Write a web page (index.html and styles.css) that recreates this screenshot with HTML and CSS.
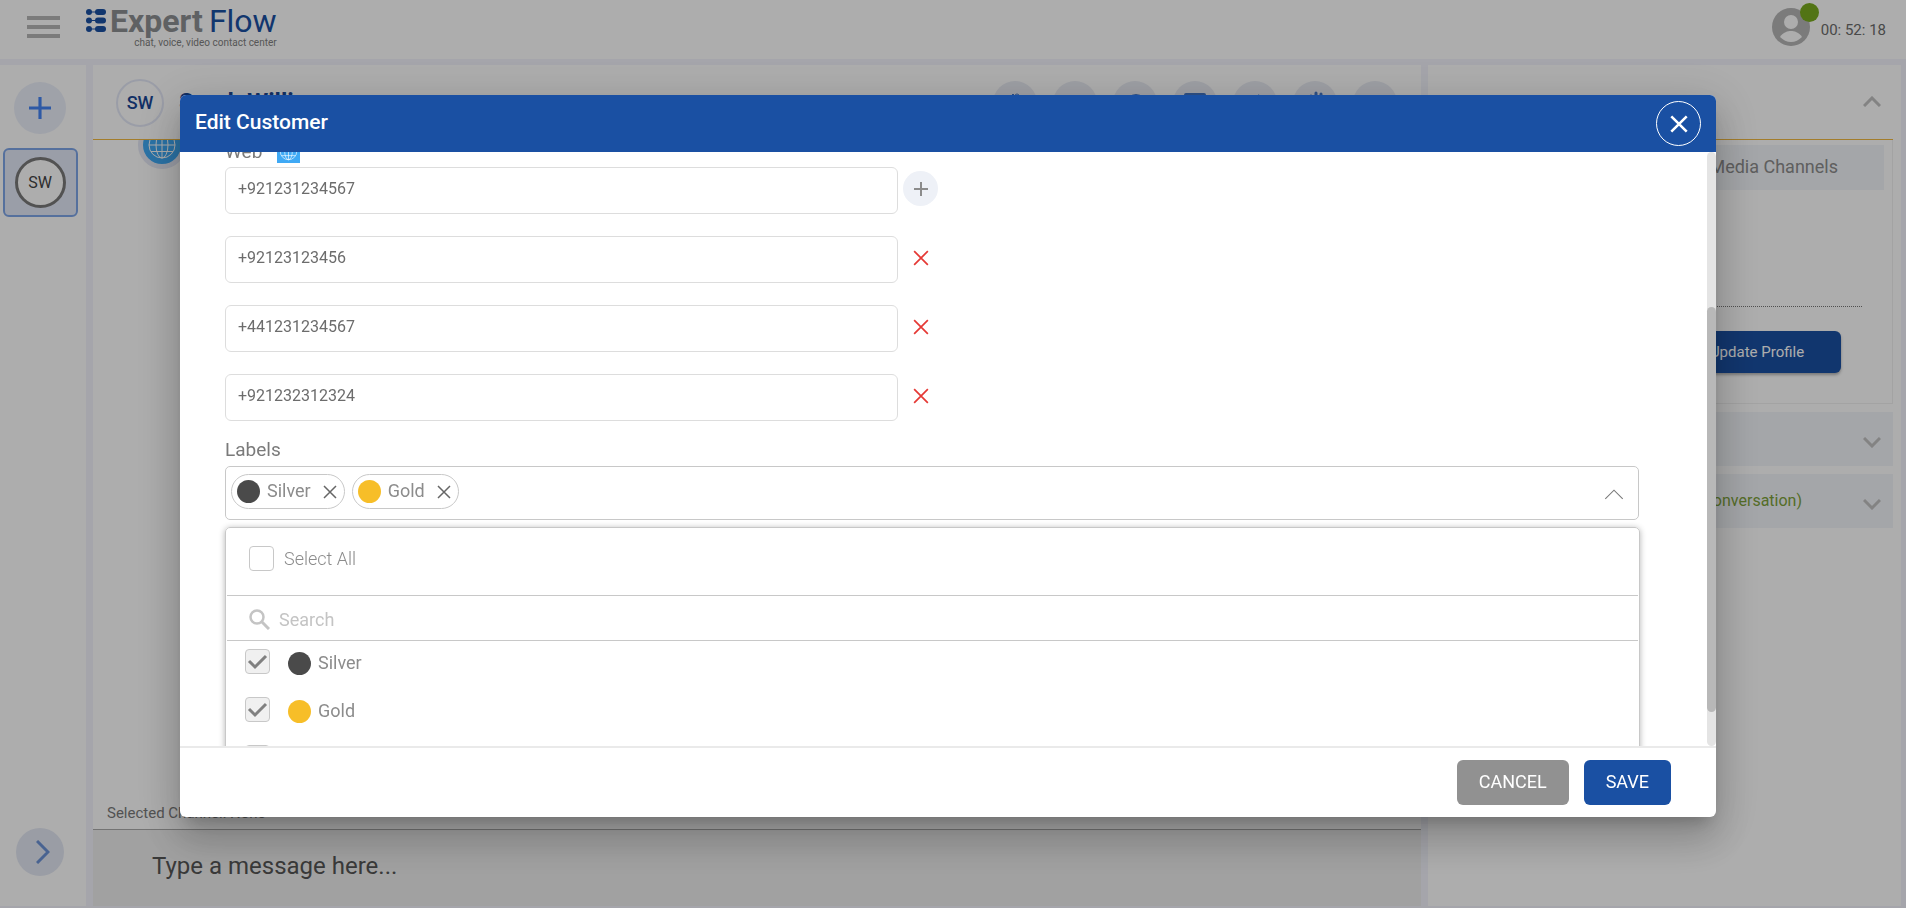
FILE: index.html
```html
<!DOCTYPE html>
<html lang="en">
<head>
    <meta charset="UTF-8">
    <meta name="viewport" content="width=device-width, initial-scale=1.0">
    <title>ExpertFlow - Edit Customer</title>
    <link rel="stylesheet" href="styles.css">
</head>
<body>
    <svg class="sprite" aria-hidden="true">
        <symbol id="cross" viewBox="0 0 14 14"><path d="M1 1l12 12M13 1L1 13" fill="none" stroke="currentColor"/></symbol>
        <symbol id="plus" viewBox="0 0 14 14"><path d="M7 0v14M0 7h14" fill="none" stroke="currentColor"/></symbol>
        <symbol id="chevron" viewBox="0 0 18 11"><path d="M1 1l8 8 8-8" fill="none" stroke="currentColor"/></symbol>
        <symbol id="globe" viewBox="0 0 30 30"><g fill="none" stroke="currentColor"><circle cx="15" cy="15" r="13"/><ellipse cx="15" cy="15" rx="6" ry="13"/><path d="M15 2v26M2 15h26M4 8.500h22M4 21.500h22"/></g></symbol>
    </svg>

    <div class="app">
        <header class="topbar">
            <button class="menu-btn" aria-label="Menu"><span></span><span></span><span></span></button>
            <a class="logo" href="#">
                <svg class="logo-mark" viewBox="0 0 20 24" width="20" height="24"><g fill="#1a50a3"><circle cx="3" cy="3" r="3"/><circle cx="3" cy="11.500" r="3"/><circle cx="3" cy="20" r="3"/><path d="M3 2.500h8v1H3zM3 11h8v1H3zM3 19.500h8v1H3z"/><rect x="9" width="11" height="6" rx="3"/><rect x="9" y="8.500" width="11" height="6" rx="3"/><rect x="9" y="17" width="11" height="6" rx="3"/></g></svg>
                <span class="logo-text"><span class="logo-name"><b>Expert</b>Flow</span><small>chat, voice, video contact center</small></span>
            </a>
            <div class="agent">
                <span class="agent-pic">
                    <svg viewBox="0 0 38 38" width="38" height="38"><circle cx="19" cy="19" r="19" fill="#b5b5b5"/><circle cx="19" cy="14" r="7" fill="#fff"/><path d="M8 29c3-5 8-6 11-6s8 1 11 6c-3 3-7 5-11 5s-8-2-11-5z" fill="#fff"/></svg>
                    <i class="status-dot"></i>
                </span>
                <span class="timer">00: 52: 18</span>
            </div>
        </header>

        <div class="workspace">
            <aside class="sidebar">
                <button class="round-btn add-chat" aria-label="New chat"><svg width="22" height="22"><use href="#plus"/></svg></button>
                <button class="chat-tile"><span>SW</span></button>
                <button class="round-btn expand" aria-label="Expand"><svg width="14" height="24" viewBox="0 0 14 24"><path d="M1 1l11 11L1 23" fill="none" stroke="currentColor" stroke-width="3"/></svg></button>
            </aside>

            <main class="chat">
                <div class="chat-head">
                    <span class="avatar">SW</span>
                    <h2>Sarah Williams</h2>
                    <div class="chat-tools">
                        <button aria-label="Notes"><svg width="24" height="24" viewBox="0 0 24 24"><path d="M10 10V3" fill="none" stroke="currentColor" stroke-width="2"/><circle cx="14" cy="5" r="2" fill="none" stroke="currentColor"/></svg></button>
                        <button aria-label="More"></button>
                        <button aria-label="Call"><svg width="24" height="24" viewBox="0 0 24 24"><circle cx="13" cy="13" r="10" fill="currentColor"/></svg></button>
                        <button aria-label="Screen"><svg width="24" height="24" viewBox="0 0 24 24"><rect x="1" y="2" width="22" height="17" rx="2" fill="currentColor"/></svg></button>
                        <button aria-label="Transfer"><svg width="24" height="24" viewBox="0 0 24 24"><path d="M15 4l6 7-6 7" fill="none" stroke="currentColor" stroke-width="2"/></svg></button>
                        <button class="raise" aria-label="Raise hand"><svg width="24" height="26" viewBox="0 0 24 26"><path d="M8 20V6M13 20V3M18 20V4M22 20V7" fill="none" stroke="currentColor" stroke-width="3" stroke-linecap="round"/></svg></button>
                        <button aria-label="Leave"></button>
                    </div>
                </div>
                <div class="chat-log"><span class="channel-icon"><svg width="30" height="30"><use href="#globe"/></svg></span></div>
                <p class="channel-note">Selected Channel: None</p>
                <textarea class="composer" aria-label="Message" placeholder="Type a message here..."></textarea>
            </main>

            <aside class="details">
                <button class="details-head" aria-label="Collapse profile"><svg class="up" width="18" height="11"><use href="#chevron"/></svg></button>
                <section class="profile">
                    <a class="tab" href="#">Media Channels</a>
                    <div class="divider"></div>
                    <button class="update-btn">Update Profile</button>
                </section>
                <button class="fold" aria-label="History"><span></span><svg width="18" height="11"><use href="#chevron"/></svg></button>
                <button class="fold"><span>(Active Conversation)</span><svg width="18" height="11"><use href="#chevron"/></svg></button>
            </aside>
        </div>
    </div>

    <div class="overlay">
        <form class="modal" role="dialog" aria-labelledby="modal-title">
            <div class="modal-head">
                <h1 id="modal-title">Edit Customer</h1>
                <button type="button" class="close-btn" aria-label="Close"><svg width="18" height="18"><use href="#cross"/></svg></button>
            </div>
            <div class="modal-body">
                <div class="fields">
                    <label class="field-label" for="web1">Web <span class="web-icon"><svg width="19" height="19"><use href="#globe"/></svg></span></label>
                    <div class="field-row">
                        <input id="web1" type="text" value="+921231234567">
                        <button type="button" class="row-btn add" aria-label="Add"><svg width="14" height="14"><use href="#plus"/></svg></button>
                    </div>
                    <div class="field-row">
                        <input type="text" value="+92123123456" aria-label="Web 2">
                        <button type="button" class="row-btn" aria-label="Remove"><svg width="16" height="16" stroke-width="1.5"><use href="#cross"/></svg></button>
                    </div>
                    <div class="field-row">
                        <input type="text" value="+441231234567" aria-label="Web 3">
                        <button type="button" class="row-btn" aria-label="Remove"><svg width="16" height="16" stroke-width="1.5"><use href="#cross"/></svg></button>
                    </div>
                    <div class="field-row">
                        <input type="text" value="+921232312324" aria-label="Web 4">
                        <button type="button" class="row-btn" aria-label="Remove"><svg width="16" height="16" stroke-width="1.5"><use href="#cross"/></svg></button>
                    </div>

                    <div class="field-label labels-title">Labels</div>
                    <div class="multi-select">
                        <span class="chip"><i class="dot silver"></i>Silver<button type="button" aria-label="Remove Silver"><svg width="14" height="14" stroke-width="1.5"><use href="#cross"/></svg></button></span>
                        <span class="chip"><i class="dot gold"></i>Gold<button type="button" aria-label="Remove Gold"><svg width="14" height="14" stroke-width="1.5"><use href="#cross"/></svg></button></span>
                        <button type="button" class="toggle" aria-label="Toggle labels"><svg class="up" width="20" height="12"><use href="#chevron"/></svg></button>
                    </div>
                    <div class="options">
                        <label class="select-all"><input type="checkbox">Select All</label>
                        <div class="search">
                            <svg width="21" height="21" viewBox="0 0 21 21"><circle cx="8" cy="8" r="6.500" fill="none" stroke="#c4c4c4" stroke-width="2.500"/><path d="M13 13l7 7" stroke="#c4c4c4" stroke-width="3"/></svg>
                            <input type="text" placeholder="Search" aria-label="Search labels">
                        </div>
                        <label class="option"><input type="checkbox" checked><i class="dot silver"></i>Silver</label>
                        <label class="option"><input type="checkbox" checked><i class="dot gold"></i>Gold</label>
                        <label class="option"><input type="checkbox" aria-label="Other label"></label>
                    </div>
                </div>
                <div class="scrollbar"><div class="thumb"></div></div>
            </div>
            <div class="modal-foot">
                <button type="button" class="btn cancel">CANCEL</button>
                <button type="submit" class="btn save">SAVE</button>
            </div>
        </form>
    </div>
</body>
</html>
```
FILE: styles.css
```css
* {
    box-sizing: border-box;
}
body {
    margin: 0;
    height: 100vh;
    overflow: hidden;
    font-family: Roboto, sans-serif;
    background-color: #f3f4fc;
    color: #7a7a7a;
}
button {
    font-family: inherit;
    background: none;
    border: 0;
    padding: 0;
    color: inherit;
}
button, .chip, .web-icon, .channel-icon {
    display: flex;
    align-items: center;
    justify-content: center;
}
h1, h2, p {
    margin: 0;
}
.sprite {
    position: absolute;
    width: 0;
    height: 0;
}
.up {
    transform: rotate(180deg);
}
.app {
    height: 100vh;
    display: flex;
    flex-direction: column;
}

/* top bar */
.topbar {
    height: 59px;
    flex: none;
    display: flex;
    align-items: flex-start;
    background-color: #fff;
    padding: 8px 20px 0 27px;
}
.menu-btn {
    flex-direction: column;
    gap: 5px;
    width: 33px;
    margin: 8px 26px 0 0;
}
.menu-btn span {
    width: 33px;
    height: 4px;
    background-color: #b5b5b5;
}
.logo {
    display: flex;
    gap: 4px;
    text-decoration: none;
    color: #1a50a3;
}
.logo-mark {
    margin-top: 1px;
}
.logo-text {
    display: flex;
    flex-direction: column;
    align-items: flex-end;
}
.logo-name {
    font-size: 32px;
    line-height: 27px;
}
.logo-name b {
    color: #8d8f93;
    margin-right: 6px;
}
.logo small {
    font-size: 10px;
    line-height: 16px;
    color: #808080;
}
.agent {
    display: flex;
    gap: 11px;
    margin-left: auto;
}
.agent-pic {
    position: relative;
    height: 38px;
}
.status-dot {
    position: absolute;
    top: -5px;
    right: -9px;
    width: 19px;
    height: 19px;
    border-radius: 50%;
    background-color: #79ab20;
}
.timer {
    font-size: 15px;
    line-height: 45px;
    color: #6c6c6c;
}

/* workspace */
.workspace {
    flex: 1;
    min-height: 0;
    display: flex;
    gap: 7px;
    padding: 6px 5px 2px 0;
}
.sidebar, .chat, .details {
    background-color: #fff;
    display: flex;
    flex-direction: column;
}
.sidebar {
    width: 86px;
    flex: none;
    align-items: center;
    padding: 17px 6px 30px 0;
}
.round-btn {
    width: 52px;
    height: 52px;
    border-radius: 50%;
    background-color: #ebeffa;
    color: #4584f4;
}
.round-btn use {
    stroke-width: 2px;
}
.chat-tile {
    width: 75px;
    height: 69px;
    margin-top: 14px;
    border: 2px solid #7ea6e8;
    border-radius: 6px;
    background-color: #e4e9f8;
}
.chat-tile span {
    width: 51px;
    height: 51px;
    border: 3px solid #7a7a7a;
    border-radius: 50%;
    background-color: #fff;
    color: #444;
    font-size: 16px;
    line-height: 45px;
}
.expand {
    width: 48px;
    height: 48px;
    margin-top: auto;
    padding-left: 5px;
    background-color: #e4e8f4;
    color: #6c93d6;
}
.chat {
    flex: 1;
    min-width: 0;
}
.chat-head {
    height: 75px;
    flex: none;
    display: flex;
    align-items: center;
    padding: 2px 24px 0 23px;
    border-bottom: 1px solid #f0b840;
}
.avatar {
    width: 48px;
    height: 48px;
    border: 2px solid #e4e8f7;
    border-radius: 50%;
    color: #1a4796;
    font-size: 18px;
    font-weight: 500;
    line-height: 44px;
    text-align: center;
}
.chat-head h2 {
    margin: 0 0 2px 15px;
    color: #1a4796;
    font-size: 24px;
    font-weight: 700;
}
.chat-tools {
    display: flex;
    gap: 16px;
    margin-left: auto;
}
.chat-tools button {
    width: 44px;
    height: 44px;
    border-radius: 50%;
    background-color: #e9ebf3;
    color: #4275c5;
}
.chat-log {
    flex: 1;
    overflow: hidden;
    padding-left: 45px;
}
.channel-icon {
    width: 48px;
    height: 48px;
    margin-top: -19px;
    border: 5px solid #e4e8f5;
    border-radius: 50%;
    background-color: #3fa9f5;
    color: #fff;
}
.channel-note {
    padding: 2px 14px 0;
    font-size: 15px;
    line-height: 32px;
    color: #7a7a7a;
}
.composer {
    height: 77px;
    flex: none;
    border: 0;
    border-top: 1px solid #aaa;
    padding: 22px 59px;
    resize: none;
    background-color: #eee;
    font-family: inherit;
    font-size: 24px;
    line-height: 28px;
}
.composer::placeholder {
    color: #555;
}
.details {
    width: 473px;
    flex: none;
    padding: 0 8px;
    color: #c2c2c2;
}
.details svg use {
    stroke-width: 3px;
}
.details-head {
    height: 75px;
    justify-content: flex-end;
    border-bottom: 1px solid #f0b840;
    padding: 0 12px 2px;
}
.profile {
    height: 264px;
    margin-bottom: 8px;
    border: 1px solid #f0f0f0;
    border-top: 0;
    padding: 5px 8px;
}
.tab {
    display: block;
    height: 45px;
    background-color: #f2f5f9;
    padding-right: 46px;
    color: #8c8c8c;
    font-size: 18px;
    line-height: 43px;
    text-align: right;
    text-decoration: none;
}
.divider {
    margin: 116px 22px 24px;
    border-top: 1px dotted #777;
}
.update-btn {
    width: 168px;
    height: 42px;
    margin: 0 43px 0 auto;
    border-radius: 6px;
    background-color: #1a50a3;
    box-shadow: 0 2px 3px rgba(0, 0, 0, 0.3);
    color: #fff;
    font-size: 15px;
}
.fold {
    height: 54px;
    justify-content: flex-end;
    gap: 61px;
    margin-bottom: 8px;
    padding: 0 12px 2px;
    background-color: #f2f5f9;
    font-size: 16px;
}
.fold span {
    color: #7da13a;
}
.fold svg {
    margin-top: 9px;
}

/* edit customer dialog */
.overlay {
    position: fixed;
    inset: 0;
    display: flex;
    padding: 95px 190px 91px 180px;
    background-color: rgba(0, 0, 0, 0.32);
}
.modal {
    flex: 1;
    min-width: 0;
    display: flex;
    flex-direction: column;
    overflow: hidden;
    border-radius: 6px;
    background-color: #fff;
    box-shadow: 0 11px 15px -7px rgba(0, 0, 0, 0.2), 0 24px 38px 3px rgba(0, 0, 0, 0.14), 0 9px 46px 8px rgba(0, 0, 0, 0.12);
}
.modal-head {
    height: 57px;
    flex: none;
    display: flex;
    align-items: center;
    justify-content: space-between;
    padding: 0 15px;
    background-color: #1a50a3;
    color: #fff;
}
.modal-head h1 {
    font-size: 21px;
    font-weight: 500;
    line-height: 24px;
    padding-bottom: 4px;
}
.close-btn {
    width: 45px;
    height: 45px;
    border: 1px solid #fff;
    border-radius: 50%;
}
.close-btn use {
    stroke-width: 2px;
}
.modal-body {
    flex: 1;
    min-height: 0;
    display: flex;
    overflow: hidden;
}
.fields {
    flex: 1;
    margin-top: -19px;
    padding: 0 67px 0 45px;
}
.field-label {
    display: flex;
    align-items: center;
    height: 34px;
    padding-top: 2px;
    font-size: 19px;
}
.web-icon {
    width: 23px;
    height: 23px;
    margin-left: 15px;
    background-color: #3fa9f5;
    color: #fff;
}
.field-row {
    display: flex;
    gap: 5px;
    margin-bottom: 22px;
}
.field-row input {
    width: 673px;
    height: 47px;
    border: 1px solid #ddd;
    border-radius: 6px;
    padding: 0 12px 5px;
    color: #6c6c6c;
    font-family: inherit;
    font-size: 16px;
}
.row-btn {
    width: 35px;
    height: 35px;
    margin-top: 4px;
    border-radius: 50%;
    color: #e53935;
}
.row-btn.add {
    background-color: #eef1f7;
    color: #8c8c8c;
}
.row-btn.add use {
    stroke-width: 2px;
}
.labels-title {
    margin-top: -11px;
    padding: 0;
}
.multi-select {
    height: 54px;
    display: flex;
    align-items: center;
    gap: 7px;
    margin: 0 1px 7px 0;
    border: 1px solid #c8c8c8;
    border-radius: 5px;
    padding: 0 14px 4px 5px;
}
.chip {
    height: 35px;
    border: 1px solid #c8c8c8;
    border-radius: 18px;
    padding: 0 7px 0 5px;
    color: #8c8c8c;
    font-size: 18px;
    line-height: 20px;
}
.chip button {
    margin: 2px 0 0 12px;
    color: #666;
}
.dot {
    width: 23px;
    height: 23px;
    border-radius: 50%;
    margin-right: 7px;
}
.silver {
    background-color: #4a4a4a;
}
.gold {
    background-color: #f7be28;
}
.toggle {
    margin: 6px 0 0 auto;
}
.options {
    height: 300px;
    border: 1px solid #c8c8c8;
    border-radius: 5px;
    padding: 0 1px;
    box-shadow: 0 1px 6px rgba(0, 0, 0, 0.3);
    font-size: 18px;
    color: #8c8c8c;
}
.options input[type="checkbox"] {
    appearance: none;
    width: 25px;
    height: 25px;
    margin: 0;
    border: 1px solid #c8c8c8;
    border-radius: 4px;
}
.options input:checked {
    background: #f0f0f0 url("data:image/svg+xml,%3Csvg xmlns='http://www.w3.org/2000/svg' viewBox='0 0 23 23'%3E%3Cpath d='M3 11l6 6L20 6' fill='none' stroke='%23808080' stroke-width='3'/%3E%3C/svg%3E") center / 23px no-repeat;
}
.select-all {
    height: 68px;
    display: flex;
    align-items: center;
    gap: 10px;
    padding: 0 22px 7px;
    border-bottom: 1px solid #c8c8c8;
    font-weight: 300;
}
.search {
    height: 45px;
    display: flex;
    align-items: center;
    gap: 9px;
    padding: 3px 22px 0;
    border-bottom: 1px solid #c8c8c8;
}
.search input {
    flex: 1;
    border: 0;
    padding: 0;
    font-family: inherit;
    font-size: 18px;
}
.search input::placeholder {
    color: #c4c4c4;
}
.option {
    height: 48px;
    display: flex;
    align-items: center;
    padding: 0 18px 5px;
}
.option input[type="checkbox"] {
    margin-bottom: 3px;
}
.option .dot {
    margin: 1px 7px 0 18px;
}
.scrollbar {
    width: 9px;
    border-radius: 5px;
    background-color: #e4e4e4;
    padding-top: 155px;
}
.thumb {
    height: 405px;
    border-radius: 5px;
    background-color: #b8b8b8;
}
.modal-foot {
    height: 71px;
    flex: none;
    display: flex;
    align-items: center;
    justify-content: flex-end;
    gap: 15px;
    border-top: 2px solid #eaeaea;
    padding: 0 45px;
}
.btn {
    height: 45px;
    border-radius: 6px;
    padding: 0 22px 2px;
    color: #fff;
    font-size: 18px;
}
.cancel {
    background-color: #919191;
}
.save {
    background-color: #1a50a3;
}
```
